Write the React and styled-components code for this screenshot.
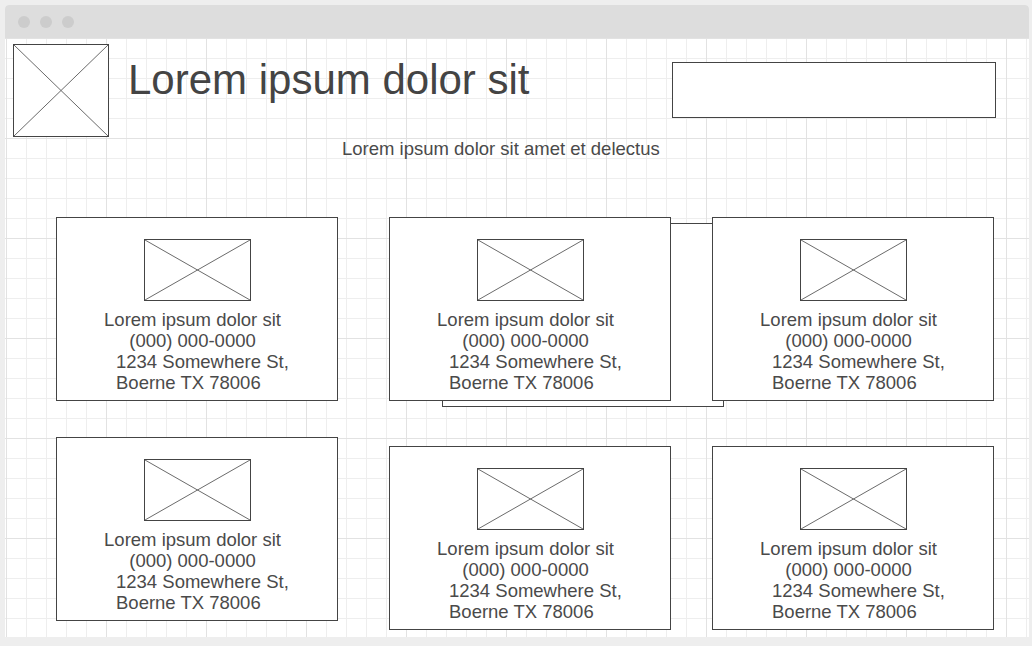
import React from "react";
import styled, { createGlobalStyle } from "styled-components";

const GlobalStyle = createGlobalStyle`
  html, body {
    margin: 0;
    padding: 0;
    background: #eeeeee;
  }
  body {
    font-family: "Liberation Sans", Arial, sans-serif;
    color: #454545;
  }
  * {
    box-sizing: border-box;
  }
`;

const Window = styled.div`
  width: 1024px;
  margin: 5px 0 0 5px;
  border-radius: 4px 4px 0 0;
  overflow: hidden;
  background: #fff;
`;

const TitleBar = styled.div`
  height: 33px;
  background: #dddddd;
  display: flex;
  align-items: center;
  gap: 10px;
  padding-left: 13px;
`;

const Dot = styled.span`
  width: 12px;
  height: 12px;
  border-radius: 50%;
  background: #cccccc;
`;

const Canvas = styled.div`
  position: relative;
  z-index: 0;
  height: 599px;
  padding: 6px 0 0 1px;
  background-color: #fff;
  background-image: linear-gradient(to right, #e2e2e2 1px, transparent 1px),
    linear-gradient(to bottom, #e2e2e2 1px, transparent 1px),
    linear-gradient(to right, #eeeeee 1px, transparent 1px),
    linear-gradient(to bottom, #eeeeee 1px, transparent 1px);
  background-size: 100px 100px, 100px 100px, 20px 20px, 20px 20px;
  background-position: 1px 0, 1px 0, 1px 0, 1px 0;
`;

const Header = styled.div`
  display: flex;
  align-items: flex-start;
  padding-left: 7px;
`;

const Frame = styled.div`
  position: relative;
  flex: none;
  width: ${(p) => p.w}px;
  height: ${(p) => p.h}px;
  border: 1px solid #444;
  background: #fff;

  svg {
    position: absolute;
    inset: 0;
    width: 100%;
    height: 100%;
  }
`;

const Title = styled.h1`
  margin: 15px 0 0 19px;
  font-size: 42px;
  line-height: 42px;
  font-weight: 400;
  color: #444;
  white-space: nowrap;
`;

const SearchBox = styled.div`
  margin: 18px 33px 0 auto;
  width: 324px;
  height: 56px;
  border: 1px solid #444;
  background: #fff;
`;

const Subtitle = styled.p`
  margin: 1px 0 0;
  padding-left: 336px;
  font-size: 18.5px;
  line-height: 21px;
  color: #4a4a4a;
`;

const Grid = styled.div`
  display: grid;
  grid-template-columns: 333px 323px 282px;
  row-gap: 36px;
  margin-top: 58px;
  padding-left: 50px;
  align-items: start;
`;

const Slot = styled.div`
  position: relative;
  margin-top: ${(p) => p.offset || 0}px;
`;

const Card = styled.div`
  width: 282px;
  height: 184px;
  border: 1px solid #444;
  background: #fff;
  padding-top: 21px;
  display: flex;
  flex-direction: column;
  align-items: center;
`;

const BackCard = styled.div`
  position: absolute;
  left: 53px;
  top: 6px;
  z-index: -1;
  width: 282px;
  height: 184px;
  border: 1px solid #444;
  background: #fff;
`;

const Info = styled.div`
  align-self: flex-start;
  margin: 8px 0 0 47px;
  width: 177px;
  font-size: 18.5px;
  line-height: 21px;
  color: #4a4a4a;
  white-space: nowrap;
`;

const Line = styled.div`
  text-align: ${(p) => (p.left ? "left" : "center")};
  padding-left: ${(p) => (p.left ? "12px" : "0")};
`;

const Placeholder = ({ w, h }) => (
  <Frame w={w} h={h}>
    <svg viewBox={`0 0 ${w} ${h}`} preserveAspectRatio="none">
      <line x1="0" y1="0" x2={w} y2={h} stroke="#666" strokeWidth="1" />
      <line x1={w} y1="0" x2="0" y2={h} stroke="#666" strokeWidth="1" />
    </svg>
  </Frame>
);

const Location = ({ offset, stacked }) => (
  <Slot offset={offset}>
    {stacked && <BackCard />}
    <Card>
      <Placeholder w={107} h={62} />
      <Info>
        <Line>Lorem ipsum dolor sit</Line>
        <Line>(000) 000-0000</Line>
        <Line left>1234 Somewhere St,</Line>
        <Line left>Boerne TX 78006</Line>
      </Info>
    </Card>
  </Slot>
);

const App = () => {
  return (
    <>
      <GlobalStyle />
      <Window>
        <TitleBar>
          <Dot />
          <Dot />
          <Dot />
        </TitleBar>
        <Canvas>
          <Header>
            <Placeholder w={96} h={93} />
            <Title>Lorem ipsum dolor sit</Title>
            <SearchBox />
          </Header>
          <Subtitle>Lorem ipsum dolor sit amet et delectus</Subtitle>
          <Grid>
            <Location />
            <Location stacked />
            <Location />
            <Location />
            <Location offset={9} />
            <Location offset={9} />
          </Grid>
        </Canvas>
      </Window>
    </>
  );
};

export default App;
